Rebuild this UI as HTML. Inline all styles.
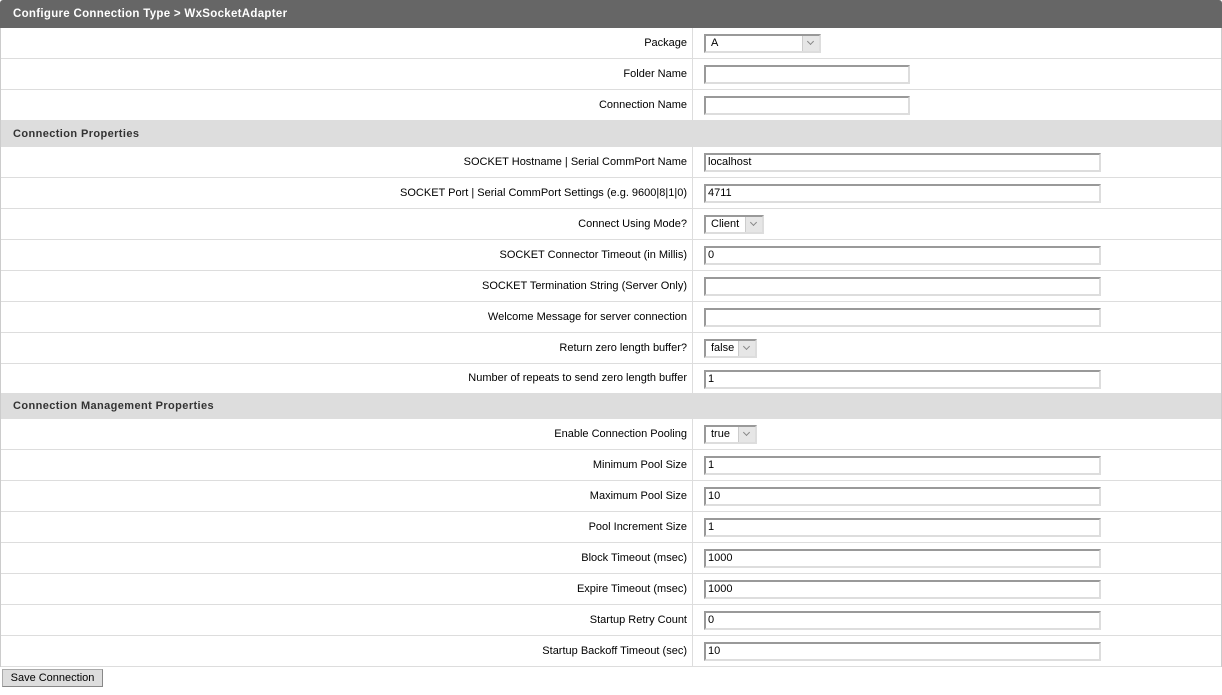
<!DOCTYPE html><html><head><style>
*{box-sizing:border-box;margin:0;padding:0}
body{width:1222px;height:695px;background:#fff;font-family:"Liberation Sans",Arial,sans-serif;font-size:11px;color:#000;position:relative;overflow:hidden}
.hd{position:absolute;left:0;top:0;width:1222px;height:28px;background:#666;color:#fff;font-weight:bold;font-size:11.5px;padding:8px 0 0 13px;letter-spacing:.3px;border-radius:3px 3px 0 0}
.wrap{position:absolute;left:0;top:28px;width:1222px;border-left:1px solid #ccc;border-right:1px solid #ccc}
.r{height:31px;border-bottom:1px solid #ddd;position:relative}
.l{position:absolute;left:0;width:692px;top:0;height:30px;border-right:1px solid #ddd;text-align:right;padding-right:5px;line-height:30px}
.s{height:26px;background:#ddd;font-weight:bold;padding:7px 0 0 12px;letter-spacing:.4px;font-size:11px;color:#333}
.i{position:absolute;left:703px;top:6px;height:19px;border:2px solid #ddd;border-top-color:#999;border-left-color:#999;padding:1px 2px;line-height:13px}
.sel{position:absolute;left:703px;top:6px;height:19px;border:2px solid #ddd;border-top-color:#999;border-left-color:#999;padding:1px 5px;line-height:13px}
.sel b{position:absolute;right:0;top:0;width:17px;height:15px;background:#e6e6e6;border-left:1px solid #ccc}
.sel b:after{content:"";position:absolute;left:5px;top:3px;width:4px;height:4px;border-right:1px solid #888;border-bottom:1px solid #888;transform:rotate(45deg)}
.btn{position:absolute;left:2px;top:669px;width:101px;height:18px;background:#ddd;border:1px solid #aaa;border-right-color:#888;border-bottom-color:#888;text-align:center;line-height:16px}
</style></head><body>
<div class="hd">Configure Connection Type &gt; WxSocketAdapter</div>
<div class="wrap">
<div class="r"><div class="l">Package</div><div class="sel" style="width:117px">A<b></b></div></div>
<div class="r"><div class="l">Folder Name</div><div class="i" style="width:206px"></div></div>
<div class="r"><div class="l">Connection Name</div><div class="i" style="width:206px"></div></div>
<div class="s">Connection Properties</div>
<div class="r"><div class="l">SOCKET Hostname | Serial CommPort Name</div><div class="i" style="width:397px">localhost</div></div>
<div class="r"><div class="l">SOCKET Port | Serial CommPort Settings (e.g. 9600|8|1|0)</div><div class="i" style="width:397px">4711</div></div>
<div class="r"><div class="l">Connect Using Mode?</div><div class="sel" style="width:60px">Client<b></b></div></div>
<div class="r"><div class="l">SOCKET Connector Timeout (in Millis)</div><div class="i" style="width:397px">0</div></div>
<div class="r"><div class="l">SOCKET Termination String (Server Only)</div><div class="i" style="width:397px"></div></div>
<div class="r"><div class="l">Welcome Message for server connection</div><div class="i" style="width:397px"></div></div>
<div class="r"><div class="l">Return zero length buffer?</div><div class="sel" style="width:53px">false<b></b></div></div>
<div class="r" style="height:30px"><div class="l" style="height:29px;line-height:29px">Number of repeats to send zero length buffer</div><div class="i" style="width:397px">1</div></div>
<div class="s" style="height:25px;padding-top:6px">Connection Management Properties</div>
<div class="r"><div class="l">Enable Connection Pooling</div><div class="sel" style="width:53px">true<b></b></div></div>
<div class="r"><div class="l">Minimum Pool Size</div><div class="i" style="width:397px">1</div></div>
<div class="r"><div class="l">Maximum Pool Size</div><div class="i" style="width:397px">10</div></div>
<div class="r"><div class="l">Pool Increment Size</div><div class="i" style="width:397px">1</div></div>
<div class="r"><div class="l">Block Timeout (msec)</div><div class="i" style="width:397px">1000</div></div>
<div class="r"><div class="l">Expire Timeout (msec)</div><div class="i" style="width:397px">1000</div></div>
<div class="r"><div class="l">Startup Retry Count</div><div class="i" style="width:397px">0</div></div>
<div class="r"><div class="l">Startup Backoff Timeout (sec)</div><div class="i" style="width:397px">10</div></div>
</div>
<div class="btn">Save Connection</div>
</body></html>
